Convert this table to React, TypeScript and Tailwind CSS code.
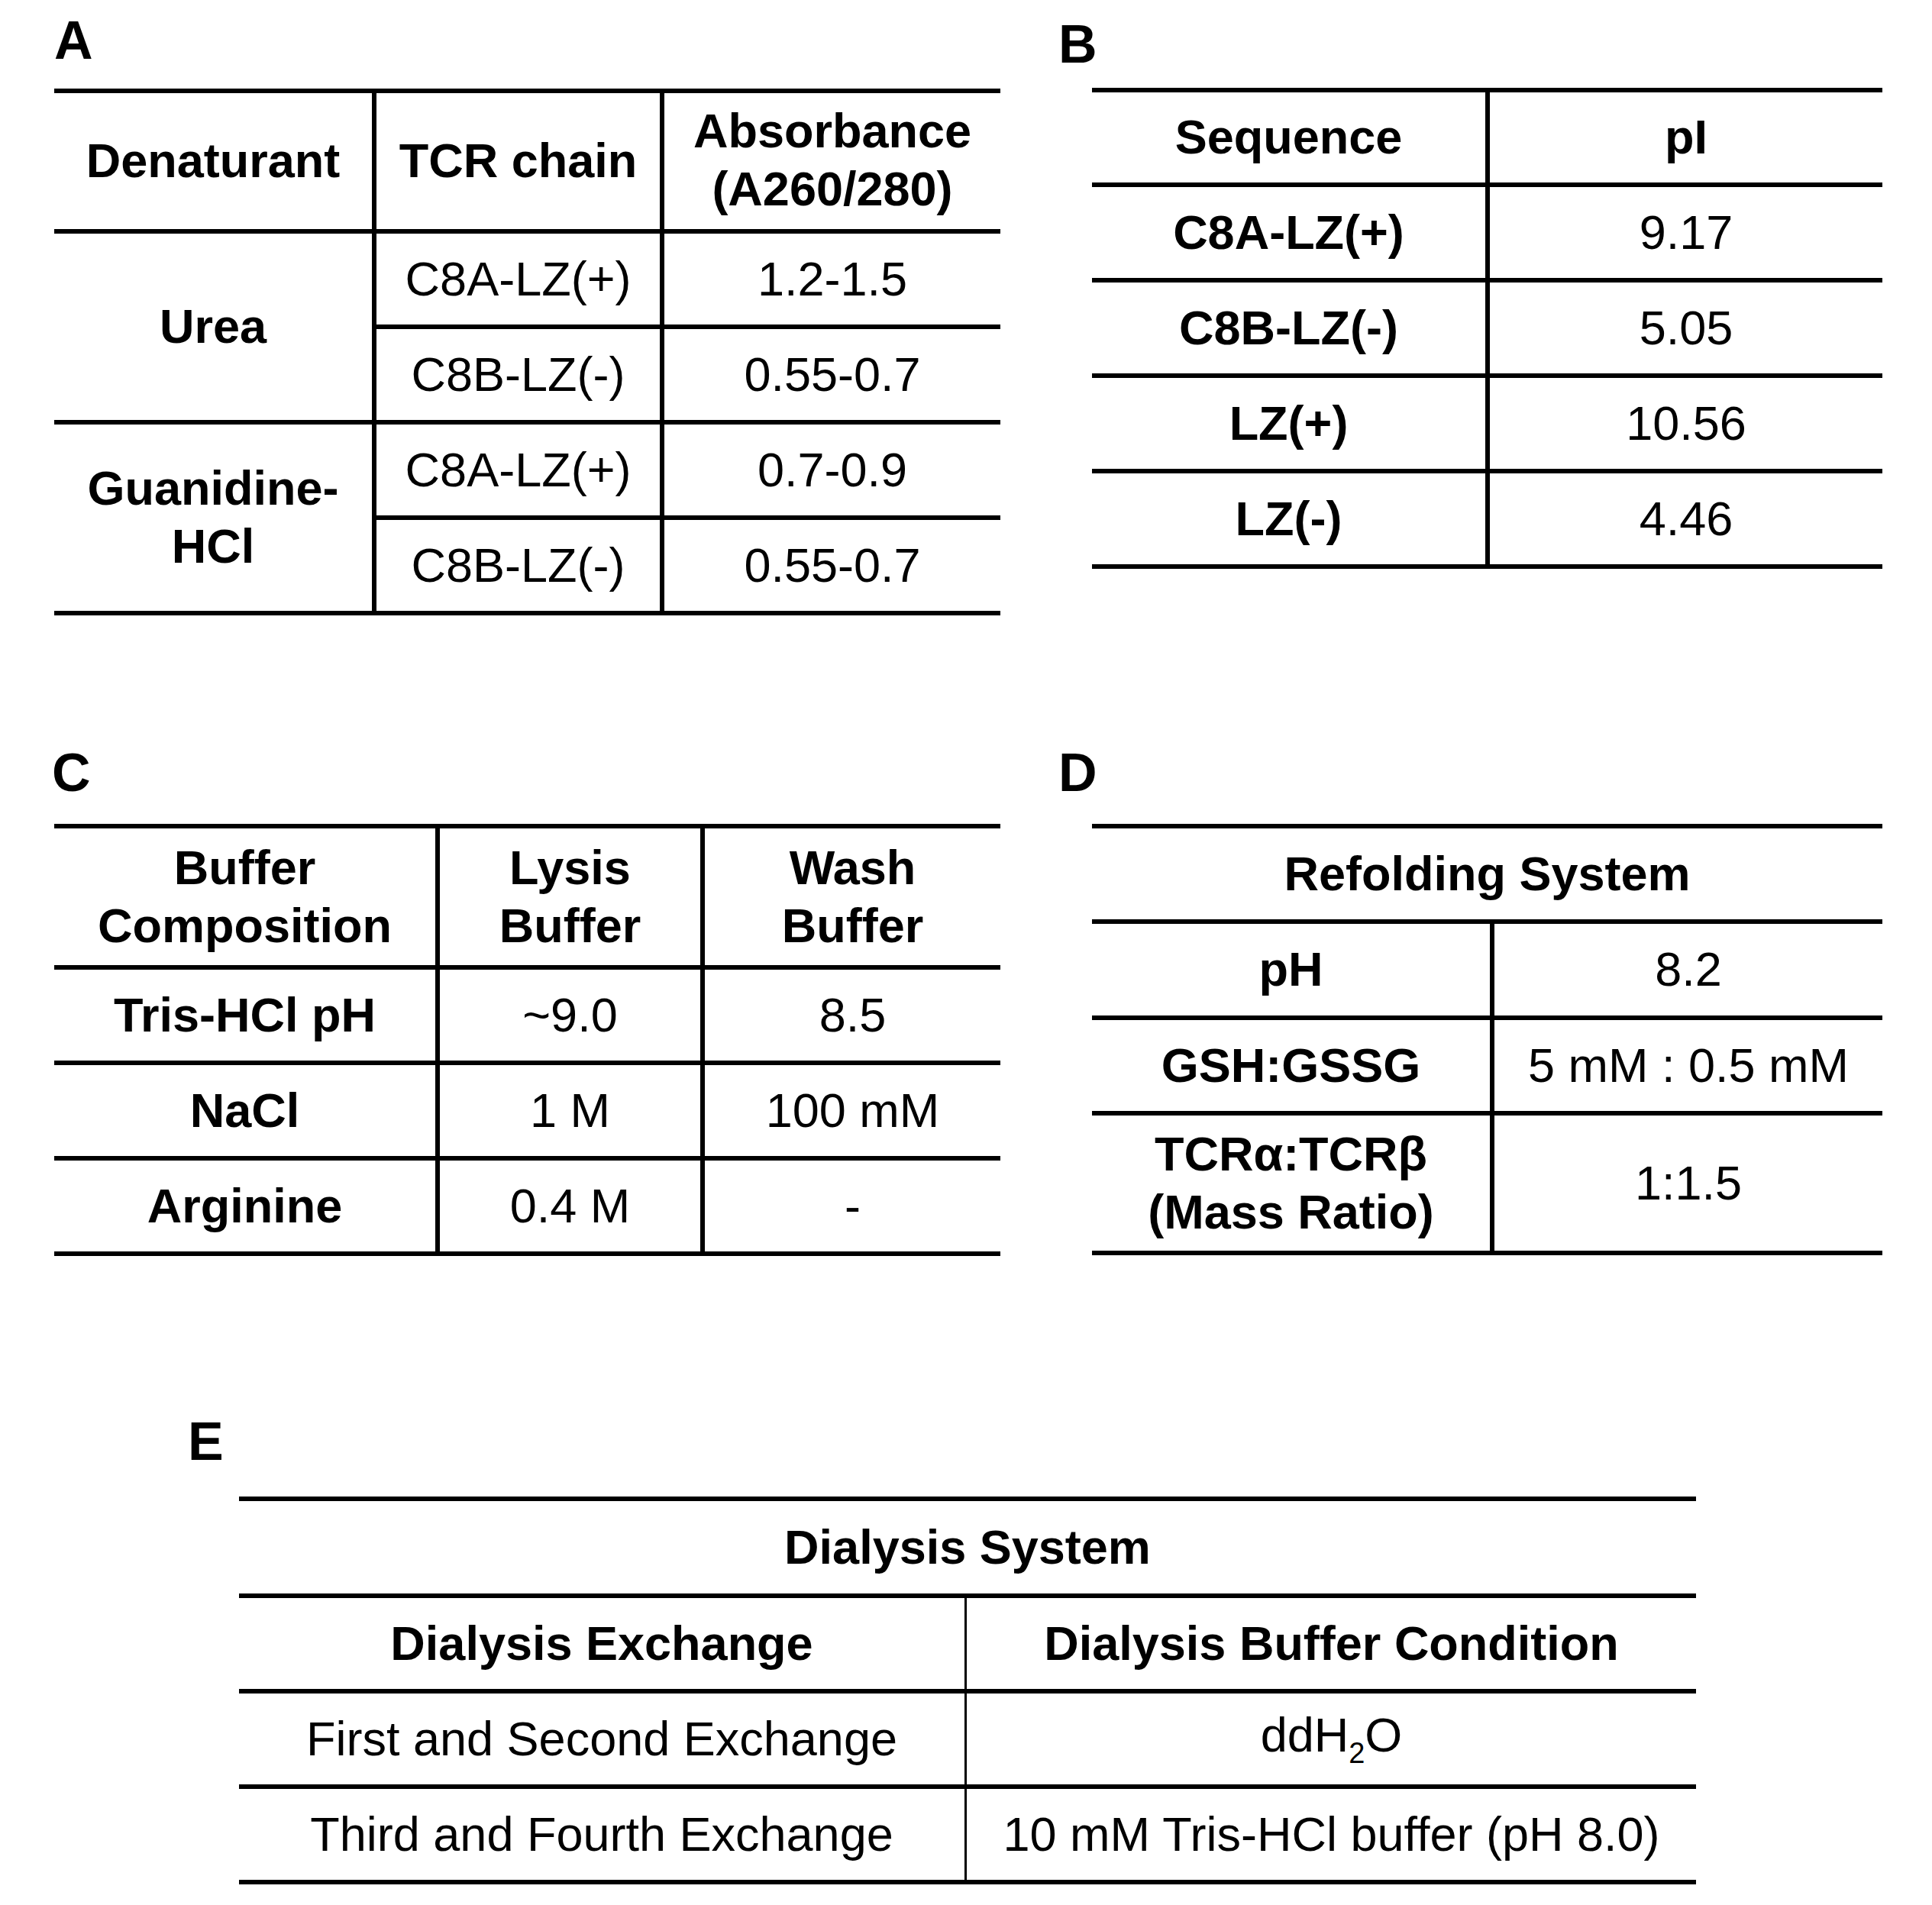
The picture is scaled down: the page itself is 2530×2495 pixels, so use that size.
import React from "react";

function Cell({ children, className = "" }: { children?: React.ReactNode; className?: string }) {
  return (
    <div className={"flex items-center justify-center text-center leading-[1.2] " + className}>
      <div>{children}</div>
    </div>
  );
}

function Label({ children, className = "" }: { children: React.ReactNode; className?: string }) {
  return <div className={"h-[70px] text-[70px] font-bold leading-none " + className}>{children}</div>;
}

function TableA() {
  const groups: { label: React.ReactNode; rows: [string, string][] }[] = [
    { label: "Urea", rows: [["C8A-LZ(+)", "1.2-1.5"], ["C8B-LZ(-)", "0.55-0.7"]] },
    {
      label: (
        <>
          Guanidine-
          <br />
          HCl
        </>
      ),
      rows: [["C8A-LZ(+)", "0.7-0.9"], ["C8B-LZ(-)", "0.55-0.7"]],
    },
  ];
  return (
    <div className="w-[1239px] border-y-[6px] border-black">
      <div className="flex h-[178px] font-bold">
        <Cell className="w-[416px]">Denaturant</Cell>
        <Cell className="w-[377px] border-l-[6px] border-black">TCR chain</Cell>
        <Cell className="flex-1 border-l-[6px] border-black pb-[2px]">
          Absorbance
          <br />
          (A260/280)
        </Cell>
      </div>
      {groups.map((g, gi) => (
        <div key={gi} className="flex border-t-[6px] border-black">
          <Cell className="w-[416px] font-bold">{g.label}</Cell>
          <div className="flex flex-1 flex-col border-l-[6px] border-black">
            {g.rows.map((r, ri) => (
              <div
                key={ri}
                className={ri === 0 ? "flex h-[119px]" : "flex h-[125px] border-t-[6px] border-black"}
              >
                <Cell className="w-[371px]">{r[0]}</Cell>
                <Cell className="flex-1 border-l-[6px] border-black">{r[1]}</Cell>
              </div>
            ))}
          </div>
        </div>
      ))}
    </div>
  );
}

function TableB() {
  const rows: [string, string][] = [
    ["C8A-LZ(+)", "9.17"],
    ["C8B-LZ(-)", "5.05"],
    ["LZ(+)", "10.56"],
    ["LZ(-)", "4.46"],
  ];
  return (
    <div className="w-[1035px] border-y-[6px] border-black">
      <div className="flex h-[118px] font-bold">
        <Cell className="w-[515px]">Sequence</Cell>
        <Cell className="flex-1 border-l-[6px] border-black">pI</Cell>
      </div>
      {rows.map((r, i) => (
        <div key={i} className="flex h-[125px] border-t-[6px] border-black">
          <Cell className="w-[515px] font-bold">{r[0]}</Cell>
          <Cell className="flex-1 border-l-[6px] border-black">{r[1]}</Cell>
        </div>
      ))}
    </div>
  );
}

function TableC() {
  const rows: [string, string, string][] = [
    ["Tris-HCl pH", "~9.0", "8.5"],
    ["NaCl", "1 M", "100 mM"],
    ["Arginine", "0.4 M", "-"],
  ];
  return (
    <div className="w-[1239px] border-y-[6px] border-black">
      <div className="flex h-[179px] font-bold">
        <Cell className="w-[499px]">
          Buffer
          <br />
          Composition
        </Cell>
        <Cell className="w-[347px] border-l-[6px] border-black">
          Lysis
          <br />
          Buffer
        </Cell>
        <Cell className="flex-1 border-l-[6px] border-black">
          Wash
          <br />
          Buffer
        </Cell>
      </div>
      {rows.map((r, i) => (
        <div key={i} className="flex h-[125px] border-t-[6px] border-black">
          <Cell className="w-[499px] font-bold">{r[0]}</Cell>
          <Cell className="w-[347px] border-l-[6px] border-black">{r[1]}</Cell>
          <Cell className="flex-1 border-l-[6px] border-black">{r[2]}</Cell>
        </div>
      ))}
    </div>
  );
}

function TableD() {
  return (
    <div className="w-[1035px] border-y-[6px] border-black">
      <Cell className="h-[119px] font-bold">Refolding System</Cell>
      <div className="flex h-[126px] border-t-[6px] border-black">
        <Cell className="w-[521px] font-bold">pH</Cell>
        <Cell className="flex-1 border-l-[6px] border-black">8.2</Cell>
      </div>
      <div className="flex h-[125px] border-t-[6px] border-black">
        <Cell className="w-[521px] font-bold">GSH:GSSG</Cell>
        <Cell className="flex-1 border-l-[6px] border-black">5 mM : 0.5 mM</Cell>
      </div>
      <div className="flex h-[183px] border-t-[6px] border-black">
        <Cell className="w-[521px] font-bold">
          TCRα:TCRβ
          <br />
          (Mass Ratio)
        </Cell>
        <Cell className="flex-1 border-l-[6px] border-black">1:1.5</Cell>
      </div>
    </div>
  );
}

function TableE() {
  return (
    <div className="w-[1908px] border-y-[6px] border-black">
      <Cell className="h-[121px] font-bold">Dialysis System</Cell>
      <div className="flex h-[125px] border-t-[6px] border-black font-bold">
        <Cell className="w-[950px]">Dialysis Exchange</Cell>
        <Cell className="flex-1 border-l-[3px] border-black">Dialysis Buffer Condition</Cell>
      </div>
      <div className="flex h-[125px] border-t-[6px] border-black">
        <Cell className="w-[950px]">First and Second Exchange</Cell>
        <Cell className="flex-1 border-l-[3px] border-black">
          ddH<span className="align-[-15px] text-[38px]">2</span>O
        </Cell>
      </div>
      <div className="flex h-[125px] border-t-[6px] border-black">
        <Cell className="w-[950px]">Third and Fourth Exchange</Cell>
        <Cell className="flex-1 border-l-[3px] border-black">10 mM Tris-HCl buffer (pH 8.0)</Cell>
      </div>
    </div>
  );
}

export default function App() {
  return (
    <div className="h-[2495px] w-[2530px] overflow-hidden bg-white pt-[18px] font-['Liberation_Sans',Arial,sans-serif] text-[63px] text-black">
      <div className="flex">
        <div className="ml-[71px] w-[1239px]">
          <Label>A</Label>
          <div className="mt-[28px]">
            <TableA />
          </div>
        </div>
        <div className="ml-[76px] pt-[5px]">
          <Label>B</Label>
          <div className="ml-[44px] mt-[22px]">
            <TableB />
          </div>
        </div>
      </div>

      <div className="mt-[171px] flex">
        <div className="ml-[68px] w-[1242px]">
          <Label>C</Label>
          <div className="ml-[3px] mt-[32px]">
            <TableC />
          </div>
        </div>
        <div className="ml-[76px]">
          <Label>D</Label>
          <div className="ml-[44px] mt-[32px]">
            <TableD />
          </div>
        </div>
      </div>

      <div className="ml-[246px] mt-[208px]">
        <Label>E</Label>
        <div className="ml-[67px] mt-[37px]">
          <TableE />
        </div>
      </div>
    </div>
  );
}
